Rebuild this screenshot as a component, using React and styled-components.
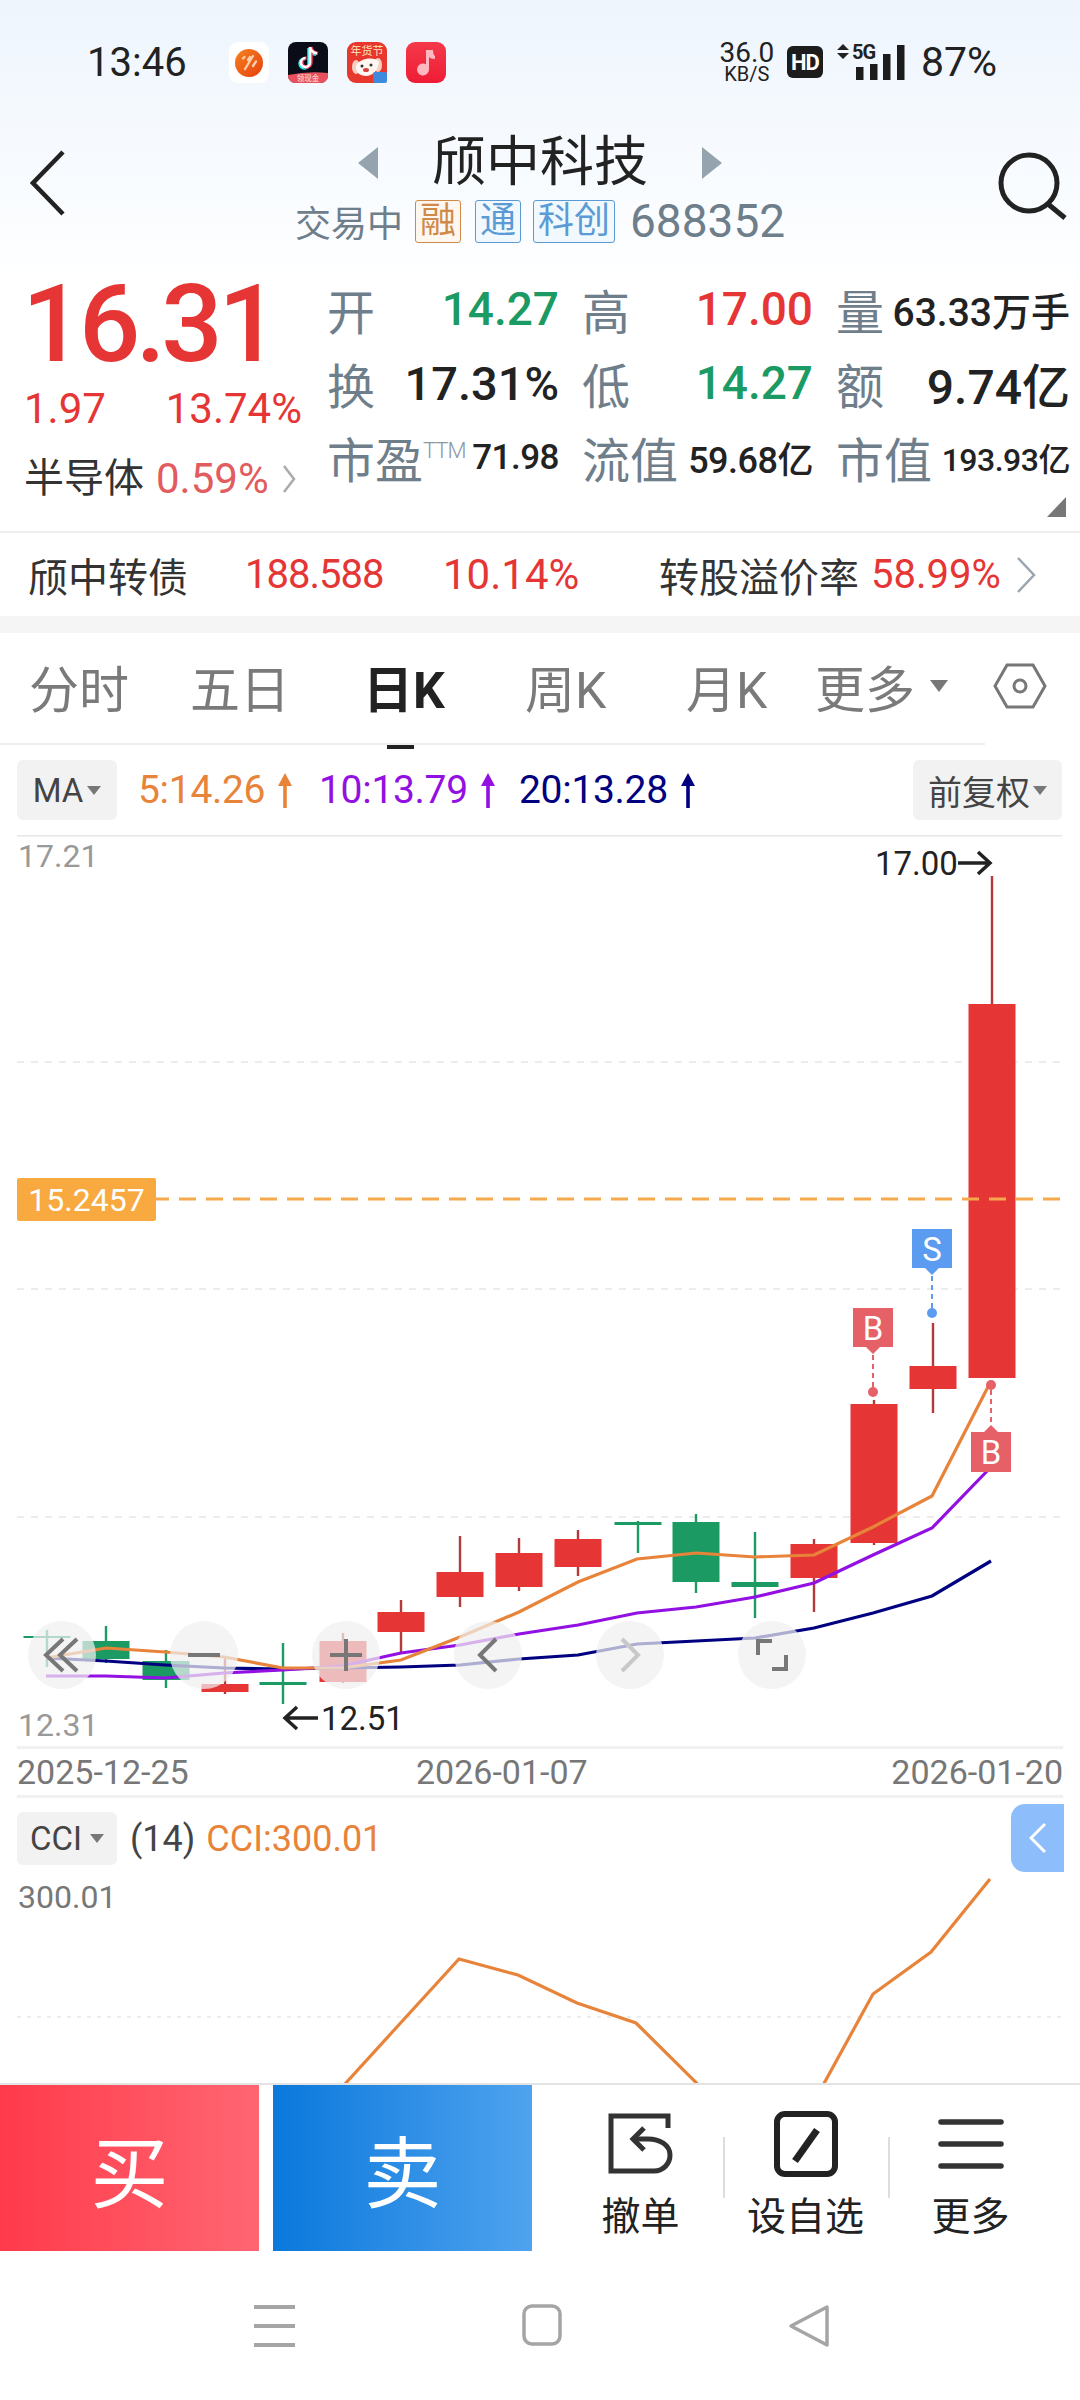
import React from 'react';
import styled, { createGlobalStyle } from 'styled-components';

const SANS = `Roboto, "Noto Sans CJK SC", sans-serif`;
const RED = '#e53535';
const GREEN = '#1b9a64';
const SLATE = '#6e7e8b';

const Global = createGlobalStyle`
  html, body { margin: 0; padding: 0; background: #fff; }
  * { box-sizing: border-box; }
`;

const Page = styled.div`
  width: 1080px;
  height: 2400px;
  overflow: hidden;
  font-family: ${SANS};
  color: #222;
  background: linear-gradient(180deg, #eef5fd 0, #fbfdff 230px, #fff 280px);
`;

/* status bar */
const StatusBar = styled.div`
  height: 112px;
  display: flex;
  align-items: center;
  padding: 12px 83px 0 87px;
`;
const Clock = styled.div`
  font-size: 40px;
  width: 142px;
`;
const Notifs = styled.div`
  display: flex;
  gap: 18px;
  flex: 1;
`;
const NetSpeed = styled.div`
  display: flex;
  flex-direction: column;
  align-items: center;
  width: 56px;
  margin-right: 12px;
  font-size: 28px;
  line-height: 25px;
  span { font-size: 20px; line-height: 19px; }
`;
const HdBadge = styled.div`
  width: 36px;
  height: 32px;
  margin-right: 14px;
  border-radius: 6px;
  background: #1c1c1c;
  color: #fff;
  font-size: 22px;
  font-weight: 700;
  letter-spacing: -1px;
  display: flex;
  align-items: center;
  justify-content: center;
`;
const Battery = styled.div`
  font-size: 41px;
  margin-left: 17px;
`;

/* header */
const Header = styled.div`
  height: 158px;
  display: flex;
  padding: 38px 12px 0 30px;
  position: relative;
`;
const TitleCol = styled.div`
  flex: 1;
  display: flex;
  flex-direction: column;
  align-items: center;
  padding-left: 18px;
`;
const TitleRow = styled.div`
  display: flex;
  align-items: center;
  height: 60px;
  margin-top: -17px;
  gap: 54px;
`;
const Title = styled.div`
  font-size: 54px;
  line-height: 60px;
`;
const SubRow = styled.div`
  display: flex;
  align-items: center;
  height: 44px;
  margin-top: 6px;
  color: ${SLATE};
  font-size: 36px;
`;
const Tag = styled.span`
  height: 43px;
  padding: 0 4px;
  margin-left: ${p => p.$gap}px;
  font-size: 36px;
  line-height: 40px;
  border: 1.5px solid ${p => p.$color};
  border-radius: 3px;
  color: ${p => p.$color};
  background: ${p => p.$bg};
`;
const Code = styled.span`
  font-size: 46px;
  margin-left: 15px;
`;

/* quote */
const Quote = styled.div`
  height: 263px;
  display: flex;
  border-bottom: 2px solid #eee;
  position: relative;
`;
const PriceCol = styled.div`
  width: 329px;
  padding-left: 25px;
`;
const Price = styled.div`
  font-size: 108px;
  line-height: 100px;
  margin: 4px 0 0 -3px;
  font-weight: 500;
  letter-spacing: -4.500px;
  color: ${RED};
`;
const ChangeRow = styled.div`
  display: flex;
  justify-content: space-between;
  width: 278px;
  margin: 11px 0 0 -1px;
  font-size: 42px;
  line-height: 48px;
  color: ${RED};
`;
const SectorRow = styled.div`
  display: flex;
  align-items: center;
  margin: 21px 0 0 -1px;
  font-size: 40px;
  line-height: 50px;
  color: #333;
  em { font-style: normal; font-size: 42px; color: #e25b5f; margin-left: 12px; }
  svg { margin-left: 13px; }
`;
const StatGrid = styled.div`
  width: 741px;
  height: 230px;
  display: grid;
  grid-template-columns: 230px 229px 232px;
  grid-auto-rows: 74px;
  column-gap: 25px;
  padding-top: 2px;
`;
const Stat = styled.div`
  display: flex;
  justify-content: space-between;
  align-items: center;
  white-space: nowrap;
`;
const StatLabel = styled.span`
  font-size: 48px;
  margin-left: -2px;
  color: ${SLATE};
  sup { font-size: 22px; font-weight: 300; line-height: 0; vertical-align: 20px; color: #8b98a3; letter-spacing: -1px; }
`;
const StatValue = styled.span`
  font-size: ${p => p.$size || 46}px;
  font-weight: 500;
  letter-spacing: ${p => p.$track || 0}px;
  color: ${p => p.$color || '#222'};
`;
const Corner = styled.div`
  position: absolute;
  right: 14px;
  bottom: 14px;
  width: 0;
  height: 0;
  border-left: 19px solid transparent;
  border-bottom: 20px solid #777;
`;

/* convertible bond row */
const BondRow = styled.div`
  height: 83px;
  display: flex;
  align-items: center;
  padding-left: 28px;
  font-size: 40px;
  white-space: nowrap;
`;
const BondCell = styled.div`
  width: ${p => p.$w}px;
  font-size: ${p => p.$size || 40}px;
  letter-spacing: ${p => p.$track || 0}px;
  color: ${p => p.$color || '#333'};
`;
const Band = styled.div`
  height: 17px;
  background: #f5f5f5;
`;

/* period tabs */
const TabBar = styled.div`
  height: 112px;
  position: relative;
  display: flex;
  align-items: center;
  padding: 0 0 6px 29px;
  &::after {
    content: '';
    position: absolute;
    left: 0;
    bottom: 0;
    width: 985px;
    height: 2px;
    background: #eee;
  }
`;
const Tab = styled.div`
  width: ${p => p.$w}px;
  font-size: 50px;
  color: ${p => (p.$active ? '#222' : '#7a7a7a')};
  font-weight: ${p => (p.$active ? 700 : 400)};
  position: relative;
  display: flex;
  align-items: center;
  white-space: nowrap;
`;
const TabMark = styled.div`
  position: absolute;
  left: 24px;
  bottom: -27px;
  width: 27px;
  height: 6px;
  background: #222;
`;
const Caret = styled.i`
  display: inline-block;
  width: 0;
  height: 0;
  margin-left: ${p => p.$ml || 6}px;
  border-left: ${p => p.$s || 8}px solid transparent;
  border-right: ${p => p.$s || 8}px solid transparent;
  border-top: ${p => (p.$s || 8) * 1.4}px solid #777;
`;

/* indicator rows */
const MaRow = styled.div`
  height: 90px;
  display: flex;
  align-items: center;
  padding: 0 18px 0 17px;
`;
const Pill = styled.div`
  height: ${p => p.$h || 60}px;
  width: ${p => p.$w}px;
  background: #f2f2f2;
  border-radius: 6px;
  display: flex;
  align-items: center;
  justify-content: center;
  font-size: ${p => p.$size || 33}px;
  color: #444;
  white-space: nowrap;
`;
const MaList = styled.div`
  display: flex;
  flex: 1;
  margin-left: 21px;
`;
const MaValue = styled.div`
  display: flex;
  align-items: center;
  width: ${p => p.$w}px;
  font-size: 39px;
  letter-spacing: -0.300px;
  color: ${p => p.$color};
  svg { margin-left: 12px; }
`;

/* candle chart */
const Chart = styled.div`
  height: 911px;
  position: relative;
`;
const ChartSvg = styled.svg`
  position: absolute;
  inset: 0;
  width: 100%;
  height: 100%;
`;
const PriceTag = styled.div`
  position: absolute;
  left: 17px;
  top: 343px;
  width: 139px;
  height: 43px;
  background: #f8a93f;
  color: #fff;
  font-size: 32px;
  border-radius: 2px;
  display: flex;
  align-items: center;
  justify-content: center;
`;
const ZoomBar = styled.div`
  position: absolute;
  left: 28px;
  top: 786px;
  width: 778px;
  display: flex;
  justify-content: space-between;
`;
const ZoomBtn = styled.div`
  width: 68px;
  height: 68px;
  border-radius: 50%;
  background: rgba(240, 240, 240, 0.72);
  display: flex;
  align-items: center;
  justify-content: center;
`;

const DateAxis = styled.div`
  height: 52px;
  margin: 0 17px;
  display: grid;
  grid-template-columns: 399px 1fr auto;
  align-items: center;
  border-top: 3px solid #f1f1f1;
  border-bottom: 3px solid #f1f1f1;
  font-size: 34px;
  color: #777;
`;

/* CCI panel */
const CciPanel = styled.div`
  height: 285px;
  position: relative;
  overflow: hidden;
`;
const CciHead = styled.div`
  position: relative;
  display: flex;
  align-items: center;
  padding: 14px 0 0 17px;
  font-size: 36px;
`;
const CciParam = styled.span`
  margin-left: 13px;
  color: #444;
`;
const CciValue = styled.span`
  margin-left: 11px;
  color: #e8833a;
`;
const CciMax = styled.div`
  position: relative;
  margin: 13px 0 0 18px;
  font-size: 32px;
  color: #777;
`;
const SideTab = styled.div`
  position: absolute;
  right: 16px;
  top: 6px;
  width: 53px;
  height: 68px;
  border-radius: 14px 0 0 14px;
  background: #8dbdfb;
  display: flex;
  align-items: center;
  justify-content: center;
`;

/* trade bar */
const TradeBar = styled.div`
  height: 168px;
  display: flex;
  border-top: 2px solid #e3e3e3;
`;
const TradeBtn = styled.div`
  width: 259px;
  margin-right: ${p => p.$mr}px;
  background: linear-gradient(90deg, ${p => p.$from}, ${p => p.$to});
  color: #fff;
  font-size: 78px;
  display: flex;
  align-items: center;
  justify-content: center;
`;
const Actions = styled.div`
  flex: 1;
  display: flex;
  padding: 26px 27px 0 26px;
`;
const Action = styled.div`
  flex: 1;
  display: flex;
  flex-direction: column;
  align-items: center;
  font-size: 39px;
  position: relative;
  svg { height: 66px; }
  span { margin-top: 14px; line-height: 52px; color: #222; }
  & + &::before {
    content: '';
    position: absolute;
    left: 0;
    top: 26px;
    width: 2px;
    height: 61px;
    background: #ddd;
  }
`;

/* android nav */
const NavBar = styled.div`
  height: 149px;
  display: flex;
  justify-content: center;
  gap: 226px;
  padding: 53px 0 0 3px;
  svg { display: block; }
`;

const candles = [
  // x center, box top, box bottom, wick top, wick bottom, up?
  [47, 1636, 1638, 1630, 1667, false],
  [106, 1641, 1659, 1626, 1663, false],
  [166, 1661, 1680, 1650, 1688, false],
  [225, 1684, 1692, 1658, 1694, true],
  [283, 1682, 1685, 1643, 1704, false],
  [343, 1641, 1682, 1633, 1683, true],
  [401, 1612, 1632, 1600, 1652, true],
  [460, 1572, 1597, 1536, 1607, true],
  [519, 1553, 1587, 1538, 1591, true],
  [578, 1539, 1567, 1530, 1576, true],
  [638, 1522, 1525, 1521, 1553, false],
  [696, 1522, 1582, 1514, 1593, false],
  [755, 1582, 1587, 1532, 1618, false],
  [814, 1544, 1578, 1539, 1612, true],
  [874, 1404, 1543, 1400, 1545, true],
  [933, 1366, 1389, 1323, 1413, true],
  [992, 1004, 1378, 876, 1378, true],
];

const ma5 = '46,1658 106,1648 165,1652 224,1657 283,1668 342,1668 401,1660 460,1637 519,1612 578,1582 637,1559 696,1553 755,1557 814,1555 873,1527 932,1496 991,1381';
const ma10 = '46,1676 106,1676 165,1678 224,1673 283,1670 342,1666 401,1653 460,1645 519,1634 578,1625 637,1613 696,1607 755,1597 814,1583 873,1555 932,1528 991,1467';
const ma20 = '46,1658 106,1661 165,1665 224,1668 283,1669 342,1668 401,1667 460,1665 519,1659 578,1655 637,1644 696,1641 755,1638 814,1628 873,1613 932,1596 991,1561';
const cci = '294,2140 406,2017 459,1959 518,1975 577,2003 636,2023 754,2140 793,2140 873,1994 931,1952 990,1879';

const UpArrow = ({ color }) => (
  <svg width="16" height="37" viewBox="0 0 16 37">
    <path d="M8 1 L15 14 H9.800 V36 H6.200 V14 H1 Z" fill={color} />
  </svg>
);

const Chevron = ({ left, color, w = 16, h = 36, sw = 3 }) => (
  <svg width={w} height={h} viewBox={`0 0 ${w} ${h}`}>
    <path
      d={left ? `M${w - 2} 2 L2 ${h / 2} L${w - 2} ${h - 2}` : `M2 2 L${w - 2} ${h / 2} L2 ${h - 2}`}
      fill="none"
      stroke={color}
      strokeWidth={sw}
    />
  </svg>
);

const AppIcons = () => (
  <>
    <svg width="41" height="41" viewBox="0 0 41 41">
      <defs>
        <linearGradient id="coinBg" x1="0" y1="0" x2="1" y2="1">
          <stop offset="0" stopColor="#f5821f" />
          <stop offset="1" stopColor="#e6400f" />
        </linearGradient>
      </defs>
      <rect width="40" height="41" rx="9" fill="#fff" />
      <circle cx="20" cy="21" r="14" fill="url(#coinBg)" />
      <path d="M14 16.500l1.500-1.500M19 18l2-3M16 27l8-13M24 24l3-4.500" stroke="#fcd0ae" strokeWidth="2.300" strokeLinecap="round" />
    </svg>
    <svg width="41" height="41" viewBox="0 0 41 41">
      <rect width="40" height="41" rx="8" fill="#0a0c18" />
      <path d="M0 33 Q20 29 40 31 V34 A7 7 0 0 1 33 41 H7 A7 7 0 0 1 0 34 Z" fill="#e8505f" />
      <path d="M22 5v15.500a4.500 4.500 0 1 1-4.500-4.500M22 5c.6 3.600 3 5.800 7 6.400" fill="none" stroke="#25f4ee" strokeWidth="3.400" transform="translate(-1 1)" />
      <path d="M22 5v15.500a4.500 4.500 0 1 1-4.500-4.500M22 5c.6 3.600 3 5.800 7 6.400" fill="none" stroke="#fe2c55" strokeWidth="3.400" transform="translate(1 0)" />
      <path d="M22 5v15.500a4.500 4.500 0 1 1-4.500-4.500M22 5c.6 3.600 3 5.800 7 6.400" fill="none" stroke="#fff" strokeWidth="2.600" />
      <text x="20" y="39" textAnchor="middle" fontSize="7.500" fontFamily={'"Noto Sans CJK SC", sans-serif'} fill="#ffe8d6">领现金</text>
    </svg>
    <svg width="41" height="41" viewBox="0 0 41 41">
      <rect width="40" height="41" rx="9" fill="#e8372f" />
      <text x="20" y="13" textAnchor="middle" fontSize="11" fontFamily={'"Noto Sans CJK SC", sans-serif'} fill="#fde8b8">年货节</text>
      <ellipse cx="9" cy="25" rx="4" ry="7" fill="#f7cfc2" />
      <ellipse cx="31" cy="23" rx="4" ry="7" fill="#f7cfc2" />
      <path d="M9 24c3-8 19-10 23-4-1 9-7 14-13 14S8 30 9 24z" fill="#fff7f2" />
      <circle cx="15" cy="24" r="1.500" fill="#333" />
      <circle cx="24" cy="23" r="1.500" fill="#333" />
      <ellipse cx="19" cy="28" rx="3" ry="2" fill="#d9413b" />
      <rect x="26" y="30" width="14" height="11" rx="2" fill="#3d8bde" />
    </svg>
    <svg width="41" height="41" viewBox="0 0 41 41">
      <defs>
        <linearGradient id="musicBg" x1="0" y1="0" x2="0" y2="1">
          <stop offset="0" stopColor="#f43a4a" />
          <stop offset="1" stopColor="#ee1c34" />
        </linearGradient>
      </defs>
      <rect width="40" height="41" rx="9" fill="url(#musicBg)" />
      <path d="M21 8h6c0 3 .5 5 2 6v3c-3 0-5-1-6-2v12.500a6 6 0 1 1-3-5.200V8z" fill="#ffb7c0" />
    </svg>
  </>
);

const SignalIcon = () => (
  <svg width="67" height="36" viewBox="0 0 67 36" overflow="visible">
    <path d="M0 6 L6 0 L12 6 Z M0 9 L6 15 L12 9 Z" fill="#222" />
    <text x="15" y="15" fontFamily="Roboto, sans-serif" fontSize="20" fontWeight="700" fill="#222" letterSpacing="-1">5G</text>
    <rect x="19" y="23" width="7.500" height="13" fill="#1c1c1c" />
    <rect x="33" y="20" width="7.500" height="16" fill="#1c1c1c" />
    <rect x="46" y="10" width="7.500" height="26" fill="#1c1c1c" />
    <rect x="60" y="1" width="7.500" height="35" fill="#1c1c1c" />
  </svg>
);

const Candles = () => (
  <>
    {candles.map(([x, top, bottom, wickTop, wickBottom, up], i) => {
      const color = up ? RED : GREEN;
      return (
        <g key={i}>
          <line x1={x} x2={x} y1={wickTop} y2={wickBottom} stroke={up ? '#b23a3a' : GREEN} strokeWidth="2.400" />
          <rect x={x - 23.500} y={top} width="47" height={bottom - top} fill={color} />
        </g>
      );
    })}
  </>
);

const Badge = ({ x, y, color, label, up }) => (
  <g>
    <path
      d={
        up
          ? `M${x - 20} ${y + 5} H${x - 7} L${x} ${y - 2} L${x + 7} ${y + 5} H${x + 20} V${y + 45} H${x - 20} Z`
          : `M${x - 20} ${y} H${x + 20} V${y + 39} H${x + 7} L${x} ${y + 46} L${x - 7} ${y + 39} H${x - 20} Z`
      }
      fill={color}
    />
    <text x={x} y={y + (up ? 37 : 32)} textAnchor="middle" fontSize="33" fontFamily="Roboto, sans-serif" fill="#fff">
      {label}
    </text>
  </g>
);

const ChartText = ({ x, y, size = 33, color = '#222', children }) => (
  <text x={x} y={y} fontSize={size} fontFamily="Roboto, sans-serif" fill={color}>
    {children}
  </text>
);

const KChart = () => (
  <ChartSvg viewBox="0 835 1080 911">
    <line x1="17" x2="1062" y1="835.500" y2="835.500" stroke="#e6e6e6" strokeWidth="2" />
    {[1062, 1289, 1517].map(y => (
      <line key={y} x1="17" x2="1062" y1={y} y2={y} stroke="#ececec" strokeWidth="2" strokeDasharray="7 7" />
    ))}
    <Candles />
    <line x1="17" x2="1060" y1="1199" y2="1199" stroke="#f5a94c" strokeWidth="3" strokeDasharray="17 10" />
    <polyline points={ma20} fill="none" stroke="#000080" strokeWidth="3.200" />
    <polyline points={ma10} fill="none" stroke="#9210e2" strokeWidth="3.200" />
    <polyline points={ma5} fill="none" stroke="#e8833a" strokeWidth="3.200" />

    <line x1="932" x2="932" y1="1276" y2="1312" stroke="#5b9bf0" strokeWidth="2" strokeDasharray="5 4" />
    <circle cx="932" cy="1313" r="5" fill="#5b9bf0" />
    <Badge x={932} y={1229} color="#5b9bf0" label="S" />
    <line x1="873" x2="873" y1="1355" y2="1390" stroke="#e66067" strokeWidth="2" strokeDasharray="5 4" />
    <circle cx="873" cy="1392" r="5" fill="#e66067" />
    <Badge x={873} y={1308} color="#e66067" label="B" />
    <line x1="991" x2="991" y1="1390" y2="1427" stroke="#e66067" strokeWidth="2" strokeDasharray="5 4" />
    <circle cx="991" cy="1385" r="5" fill="#e66067" />
    <Badge x={991} y={1427} color="#e66067" label="B" up />

    <ChartText x={18} y={867} size={32} color="#999">17.21</ChartText>
    <ChartText x={18} y={1736} size={32} color="#999">12.31</ChartText>
    <ChartText x={875} y={875}>17.00</ChartText>
    <path d="M958 863 H990 M978 852 L990 863 L978 874" fill="none" stroke="#222" strokeWidth="3.500" />
    <ChartText x={321} y={1730}>12.51</ChartText>
    <path d="M318 1718 H285 M297 1707 L285 1718 L297 1729" fill="none" stroke="#222" strokeWidth="3.500" />
  </ChartSvg>
);

const zoomIcons = [
  <path key="a" d="M25 8 L8 24 L25 40 M39 8 L22 24 L39 40" />,
  <path key="b" d="M8 24 H40" />,
  <path key="c" d="M8 24 H40 M24 8 V40" />,
  <path key="d" d="M32 8 L16 24 L32 40" />,
  <path key="e" d="M16 8 L32 24 L16 40" stroke="#c8c8c8" />,
  <path key="f" d="M24 10 H10 V24 M24 38 H38 V24" />,
];

const Index = () => (
  <Page>
    <Global />
    <StatusBar>
      <Clock>13:46</Clock>
      <Notifs>
        <AppIcons />
      </Notifs>
      <NetSpeed>
        <div>36.0</div>
        <span>KB/S</span>
      </NetSpeed>
      <HdBadge>HD</HdBadge>
      <SignalIcon />
      <Battery>87%</Battery>
    </StatusBar>

    <Header>
      <svg width="36" height="66" viewBox="0 0 36 66">
        <path d="M33 2 L3 33 L33 64" fill="none" stroke="#222" strokeWidth="4.500" />
      </svg>
      <TitleCol>
        <TitleRow>
          <svg width="20" height="32" viewBox="0 0 20 32"><path d="M20 0 V32 L0 16 Z" fill="#95a3ae" /></svg>
          <Title>颀中科技</Title>
          <svg width="20" height="32" viewBox="0 0 20 32"><path d="M0 0 V32 L20 16 Z" fill="#95a3ae" /></svg>
        </TitleRow>
        <SubRow>
          交易中
          <Tag $gap={12} $color="#cf8a4a" $bg="#fdf7ef">融</Tag>
          <Tag $gap={14} $color="#5b9bd5" $bg="#f1f8fe">通</Tag>
          <Tag $gap={12} $color="#5b9bd5" $bg="#f1f8fe">科创</Tag>
          <Code>688352</Code>
        </SubRow>
      </TitleCol>
      <svg width="72" height="70" viewBox="0 0 72 70">
        <circle cx="33" cy="33" r="28" fill="none" stroke="#222" strokeWidth="5" />
        <path d="M52 54 L69 68" stroke="#222" strokeWidth="5" />
      </svg>
    </Header>

    <Quote>
      <PriceCol>
        <Price>16.31</Price>
        <ChangeRow>
          <span>1.97</span>
          <span>13.74%</span>
        </ChangeRow>
        <SectorRow>
          半导体<em>0.59%</em>
          <Chevron color="#aaa" w={14} h={30} sw={2.500} />
        </SectorRow>
      </PriceCol>
      <StatGrid>
        <Stat><StatLabel>开</StatLabel><StatValue $color={GREEN}>14.27</StatValue></Stat>
        <Stat><StatLabel>高</StatLabel><StatValue $color={RED}>17.00</StatValue></Stat>
        <Stat><StatLabel>量</StatLabel><StatValue $size={39}>63.33万手</StatValue></Stat>
        <Stat><StatLabel>换</StatLabel><StatValue $size={47}>17.31%</StatValue></Stat>
        <Stat><StatLabel>低</StatLabel><StatValue $color={GREEN}>14.27</StatValue></Stat>
        <Stat><StatLabel>额</StatLabel><StatValue $size={48}>9.74亿</StatValue></Stat>
        <Stat><StatLabel>市盈<sup>TTM</sup></StatLabel><StatValue $size={35} $track={-0.5}>71.98</StatValue></Stat>
        <Stat><StatLabel>流值</StatLabel><StatValue $size={36} $track={-0.5}>59.68亿</StatValue></Stat>
        <Stat><StatLabel>市值</StatLabel><StatValue $size={32} $track={-0.5}>193.93亿</StatValue></Stat>
      </StatGrid>
      <Corner />
    </Quote>

    <BondRow>
      <BondCell $w={217}>颀中转债</BondCell>
      <BondCell $w={198} $color={RED} $track={-1}>188.588</BondCell>
      <BondCell $w={216} $color={RED} $size={42}>10.14%</BondCell>
      <BondCell $w={212}>转股溢价率</BondCell>
      <BondCell $w={145} $color={RED}>58.99%</BondCell>
      <Chevron color="#9aa5af" w={20} h={38} sw={2.500} />
    </BondRow>
    <Band />

    <TabBar>
      <Tab $w={161}>分时</Tab>
      <Tab $w={173}>五日</Tab>
      <Tab $w={162} $active>日K<TabMark /></Tab>
      <Tab $w={161}>周K</Tab>
      <Tab $w={129}>月K</Tab>
      <Tab $w={178}>更多<Caret $ml={15} $s={9} /></Tab>
      <svg width="54" height="48" viewBox="0 0 54 48">
        <path d="M14 3 H40 L52 24 L40 45 H14 L2 24 Z" fill="none" stroke="#777" strokeWidth="3" />
        <circle cx="27" cy="24" r="6" fill="none" stroke="#777" strokeWidth="3" />
      </svg>
    </TabBar>

    <MaRow>
      <Pill $w={100}>MA<Caret $ml={4} $s={7} /></Pill>
      <MaList>
        <MaValue $w={181} $color="#e8833a">5:14.26<UpArrow color="#e8833a" /></MaValue>
        <MaValue $w={200} $color="#9210e2">10:13.79<UpArrow color="#9210e2" /></MaValue>
        <MaValue $w={200} $color="#000080">20:13.28<UpArrow color="#000080" /></MaValue>
      </MaList>
      <Pill $w={149} $size={34}>前复权<Caret $ml={3} $s={7} /></Pill>
    </MaRow>

    <Chart>
      <KChart />
      <PriceTag>15.2457</PriceTag>
      <ZoomBar>
        {zoomIcons.map((icon, i) => (
          <ZoomBtn key={i}>
            <svg width="48" height="48" viewBox="0 0 48 48" fill="none" stroke="#777" strokeWidth="4">
              {icon}
            </svg>
          </ZoomBtn>
        ))}
      </ZoomBar>
    </Chart>

    <DateAxis>
      <span>2025-12-25</span>
      <span>2026-01-07</span>
      <span>2026-01-20</span>
    </DateAxis>

    <CciPanel>
      <ChartSvg viewBox="0 1798 1080 285">
        <line x1="17" x2="1062" y1="2017" y2="2017" stroke="#ececec" strokeWidth="2" strokeDasharray="4 6" />
        <polyline points={cci} fill="none" stroke="#e8833a" strokeWidth="3.200" />
      </ChartSvg>
      <CciHead>
        <Pill $w={100} $h={53} $size={33}>CCI<Caret $ml={8} $s={7} /></Pill>
        <CciParam>(14)</CciParam>
        <CciValue>CCI:300.01</CciValue>
      </CciHead>
      <CciMax>300.01</CciMax>
      <SideTab><Chevron left color="#fff" w={18} h={32} sw={3} /></SideTab>
    </CciPanel>

    <TradeBar>
      <TradeBtn $mr={14} $from="#ff3a4b" $to="#ff6672">买</TradeBtn>
      <TradeBtn $from="#0a78dc" $to="#4fa3ee">卖</TradeBtn>
      <Actions>
        <Action>
          <svg width="66" height="66" viewBox="0 0 66 66" fill="none" stroke="#333" strokeWidth="5">
            <path d="M60 17 V5 H3 V60 H46 C56 60 62 52 62 44 C62 34 52 28 40 28 H26" />
            <path d="M36 17 L25 28 L36 39" />
          </svg>
          <span>撤单</span>
        </Action>
        <Action>
          <svg width="66" height="66" viewBox="0 0 66 66" fill="none" stroke="#222">
            <rect x="4" y="3" width="58" height="60" rx="8" strokeWidth="6" />
            <path d="M44 19 L22 50" strokeWidth="7" />
          </svg>
          <span>设自选</span>
        </Action>
        <Action>
          <svg width="66" height="66" viewBox="0 0 66 66" stroke="#333" strokeWidth="5.500" strokeLinecap="round">
            <path d="M3 11 H63 M3 33 H63 M3 55 H63" />
          </svg>
          <span>更多</span>
        </Action>
      </Actions>
    </TradeBar>

    <NavBar>
      <svg width="42" height="44" viewBox="0 0 42 44" fill="none" stroke="#a5a5a5" strokeWidth="4">
        <path d="M0 3 H41 M0 22 H41 M0 41 H41" />
      </svg>
      <svg width="40" height="42" viewBox="0 0 40 42" fill="none" stroke="#a5a5a5" strokeWidth="3.500">
        <rect x="2" y="2" width="36" height="38" rx="8" />
      </svg>
      <svg width="42" height="44" viewBox="0 0 42 44" fill="none" stroke="#a5a5a5" strokeWidth="3.500" strokeLinejoin="round">
        <path d="M39 3 V41 L3 22 Z" />
      </svg>
    </NavBar>
  </Page>
);

export default Index;
